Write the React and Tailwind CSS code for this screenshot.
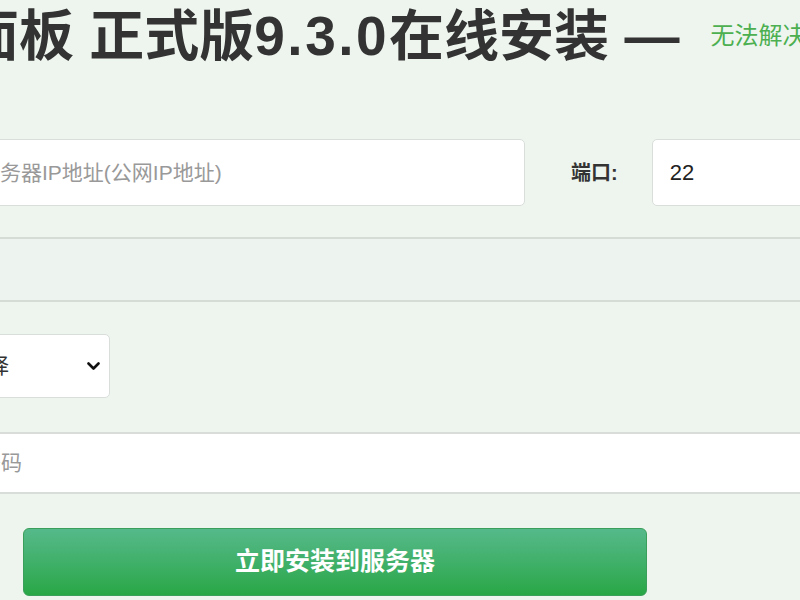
import React from "react";

const font = { fontFamily: '"Liberation Sans", "Noto Sans CJK SC", sans-serif' };

export default function App() {
  return (
    <div className="w-[800px] h-[600px] overflow-hidden bg-[#eef5ef]" style={font}>
      <div className="-ml-[160px] w-[1100px]">
        {/* title */}
        <div className="flex items-center h-[70px] pt-[2px] pl-[14px] whitespace-nowrap">
          <h1 className="text-[55px] leading-[70px] font-bold text-[#333]">
            宝塔面板 正式版<span className="tracking-[2.5px]">9.3.0</span>在线安装 —
          </h1>
          <a className="ml-[31px] text-[24px] text-[#4caf50]">无法解决？点击查看教程</a>
        </div>

        {/* ip + port */}
        <div className="flex items-center mt-[69px] pl-[80px] whitespace-nowrap">
          <input
            className="shrink-0 w-[605px] h-[67px] bg-white border border-[#d9dedb] rounded-[5px] pl-[16px] text-[21px] text-[#333] placeholder:text-[#999] outline-none"
            placeholder="输入服务器IP地址(公网IP地址)"
          />
          <label className="shrink-0 ml-[46px] text-[20px] font-bold text-[#333]">端口:</label>
          <input
            className="shrink-0 ml-[34px] w-[300px] h-[67px] bg-white border border-[#d9dedb] rounded-[5px] pl-[17px] text-[22px] text-[#222] outline-none"
            defaultValue="22"
          />
        </div>

        {/* readonly band */}
        <div className="mt-[31px] pl-[80px]">
          <input
            readOnly
            className="block w-[1000px] h-[65px] bg-[#edf4ef] border-2 border-[#d5dcd6] rounded-[5px] outline-none"
          />
        </div>

        {/* select */}
        <div className="mt-[32px] pl-[80px]">
          <div className="flex items-center justify-between w-[190px] h-[64px] bg-white border border-[#d9dedb] rounded-[5px] pl-[25px] pr-[9px]">
            <span className="text-[21px] text-[#333] whitespace-nowrap">请选择</span>
            <svg width="13" height="9" viewBox="0 0 13 9" fill="none">
              <path d="M1.5 1.5 6.5 6.5 11.5 1.5" stroke="#111" strokeWidth="2.6" strokeLinecap="round" strokeLinejoin="round" />
            </svg>
          </div>
        </div>

        {/* password */}
        <div className="mt-[34px] pl-[80px]">
          <input
            type="password"
            className="block w-[1000px] h-[62px] bg-white border-2 border-[#d8ddd9] rounded-[5px] pl-[16px] text-[21px] placeholder:text-[#999] outline-none"
            placeholder="输入密码"
          />
        </div>

        {/* submit */}
        <div className="mt-[34px] pl-[183px]">
          <button className="w-[624px] h-[68px] rounded-[6px] border border-[#3a9f5a] bg-gradient-to-b from-[#55b98a] to-[#28a745] text-white text-[25px] font-bold">
            立即安装到服务器
          </button>
        </div>
      </div>
    </div>
  );
}
